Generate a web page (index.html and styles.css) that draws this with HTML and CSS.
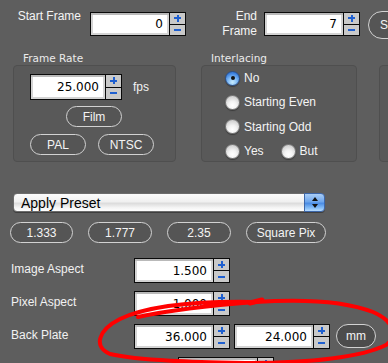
FILE: index.html
```html
<!DOCTYPE html>
<html>
<head>
<meta charset="utf-8">
<link rel="stylesheet" href="styles.css">
</head>
<body>
<div class="page">
  <div class="row-top">
    <div class="lbl lbl-start">Start Frame</div>
    <div class="field h24">
      <div class="input w80">0</div>
      <div class="spin"><span class="up"></span><span class="dn"></span></div>
    </div>
    <div class="lbl lbl-end">End<br>Frame</div>
    <div class="field h24">
      <div class="input w80">7</div>
      <div class="spin"><span class="up"></span><span class="dn"></span></div>
    </div>
    <button class="pill pill-big">Set</button>
  </div>

  <div class="groups">
    <div class="group g1">
      <div class="gtitle">Frame Rate</div>
      <div class="gbox">
        <div class="fps-row">
          <div class="field h26">
            <div class="input w76">25.000</div>
            <div class="spin"><span class="up"></span><span class="dn"></span></div>
          </div>
          <span class="unit">fps</span>
        </div>
        <div class="film-row"><button class="pill w56">Film</button></div>
        <div class="std-row">
          <button class="pill w56">PAL</button>
          <button class="pill w56">NTSC</button>
        </div>
      </div>
    </div>
    <div class="group g2">
      <div class="gtitle">Interlacing</div>
      <div class="gbox radios">
        <div class="rrow"><span class="radio on"></span><span class="rlabel">No</span></div>
        <div class="rrow"><span class="radio"></span><span class="rlabel">Starting Even</span></div>
        <div class="rrow"><span class="radio"></span><span class="rlabel">Starting Odd</span></div>
        <div class="rrow">
          <span class="radio"></span><span class="rlabel">Yes</span>
          <span class="radio r-but"></span><span class="rlabel">But</span>
        </div>
      </div>
    </div>
    <div class="group g3">
      <div class="gtitle">&nbsp;</div>
      <div class="gbox"></div>
    </div>
  </div>

  <div class="popup">
    <span class="popup-text">Apply Preset</span>
    <span class="popup-arrows"><span class="arr-up"></span><span class="arr-dn"></span></span>
  </div>

  <div class="presets">
    <button class="pill w63">1.333</button>
    <button class="pill w64">1.777</button>
    <button class="pill w64">2.35</button>
    <button class="pill w80p">Square Pix</button>
  </div>

  <div class="rows">
    <div class="arow">
      <div class="alabel">Image Aspect</div>
      <div class="field h25">
        <div class="input w80">1.500</div>
        <div class="spin"><span class="up"></span><span class="dn"></span></div>
      </div>
    </div>
    <div class="arow">
      <div class="alabel">Pixel Aspect</div>
      <div class="field h25">
        <div class="input w80">1.000</div>
        <div class="spin"><span class="up"></span><span class="dn"></span></div>
      </div>
    </div>
    <div class="arow">
      <div class="alabel">Back Plate</div>
      <div class="field h25">
        <div class="input w80">36.000</div>
        <div class="spin"><span class="up"></span><span class="dn"></span></div>
      </div>
      <div class="field h25 second">
        <div class="input w80">24.000</div>
        <div class="spin"><span class="up"></span><span class="dn"></span></div>
      </div>
      <button class="pill pill-mm">mm</button>
    </div>
    <div class="arow last">
      <div class="field h25">
        <div class="input w80"></div>
        <div class="spin"><span class="up"></span><span class="dn"></span></div>
      </div>
    </div>
  </div>
</div>

<svg class="mark" width="388" height="363" viewBox="0 0 388 363">
  <path d="M255 302 C 200 301, 150 305, 120 319 C 98 330, 93 347, 110 354 C 140 361, 200 362, 250 363 C 310 363, 362 357, 386 345 C 398 336, 394 321, 373 312 C 345 301, 300 299, 255 302 C 215 305, 175 309, 138 317" fill="none" stroke="#ff0000" stroke-width="4" stroke-linecap="round"/>
  <path d="M250 303 L 262 300" fill="none" stroke="#ff0000" stroke-width="5" stroke-linecap="round"/>
</svg>
</body>
</html>
```

FILE: styles.css
```css
html, body {
  margin: 0;
  padding: 0;
  overflow: hidden;
  background: #5e5e5e;
}

body {
  width: 388px;
  height: 363px;
  position: relative;
  font-family: "Liberation Sans", Arial, sans-serif;
  font-size: 12px;
  color: #f2f2f2;
}

.page {
  width: 600px;
}

/* ---------- generic field with spinner ---------- */
.field {
  display: flex;
  flex: none;
}
.h24 { height: 24px; }
.h25 { height: 25px; }
.h26 { height: 26px; }

.input {
  box-sizing: border-box;
  height: 100%;
  border: 1px solid #0a0a0a;
  background: #fff;
  box-shadow: inset 0 2px 0 #b9b9b9, inset 0 0 0 2px #d4d4d4;
  font-family: "DejaVu Sans", sans-serif;
  font-size: 12px;
  color: #000;
  text-align: right;
  padding-right: 6px;
  display: flex;
  align-items: center;
  justify-content: flex-end;
}
.w80 { width: 80px; }
.w76 { width: 76px; }

.spin {
  box-sizing: border-box;
  width: 16px;
  height: 100%;
  border: 1px solid #0a0a0a;
  border-left: none;
  display: flex;
  flex-direction: column;
}
.spin span {
  flex: 1;
  background: #c9c9c9;
  display: flex;
  align-items: center;
  justify-content: center;
}
.spin .up {
  border-bottom: 1px solid #0a0a0a;
}
.spin .up::before {
  content: "";
  width: 7px;
  height: 7px;
  background:
    linear-gradient(#1e5fd0, #1e5fd0) center / 7px 2px no-repeat,
    linear-gradient(#1e5fd0, #1e5fd0) center / 2px 7px no-repeat;
}
.spin .dn::before {
  content: "";
  width: 7px;
  height: 2px;
  background: #1e5fd0;
}

/* ---------- pill buttons ---------- */
.pill {
  box-sizing: border-box;
  height: 21px;
  border: 1px solid #d2d2d2;
  border-radius: 11px;
  background: #555555;
  color: #f4f4f4;
  font-family: "Liberation Sans", Arial, sans-serif;
  font-size: 12px;
  padding: 0;
  margin: 0;
  display: flex;
  align-items: center;
  justify-content: center;
  flex: none;
}
.w56 { width: 56px; }
.w63 { width: 63px; }
.w64 { width: 64px; }
.w80p { width: 80px; }

/* ---------- top row ---------- */
.row-top {
  display: flex;
  align-items: flex-start;
  margin-top: 12px;
  height: 24px;
}
.lbl {
  flex: none;
  text-align: right;
  font-size: 12px;
  color: #f4f4f4;
}
.lbl-start {
  width: 81px;
  line-height: 14px;
  margin-top: -3px;
  margin-right: 9px;
}
.lbl-end {
  width: 71px;
  line-height: 15px;
  margin-top: -3px;
  margin-right: 7px;
}
.pill-big {
  height: 28px;
  border-radius: 14px;
  width: 60px;
  margin-left: 8px;
  margin-top: -1px;
  justify-content: flex-start;
  padding-left: 11px;
}

/* ---------- groups ---------- */
.groups {
  display: flex;
  margin-top: 16px;
  margin-left: 13px;
}
.group {
  flex: none;
}
.g1 { width: 163px; }
.g2 { width: 156px; margin-left: 25px; }
.g3 { width: 120px; margin-left: 22px; }

.gtitle {
  height: 13px;
  line-height: 12px;
  padding-left: 10px;
  font-family: "DejaVu Sans", sans-serif;
  font-size: 10.5px;
  color: #ebebeb;
}
.gbox {
  box-sizing: border-box;
  height: 97px;
  border: 1px solid #4f4f4f;
  border-radius: 4px;
  background: #595959;
}

.fps-row {
  display: flex;
  align-items: center;
  margin-top: 8px;
  padding-left: 16px;
}
.unit {
  margin-left: 11px;
  font-size: 12px;
  line-height: 14px;
}
.film-row {
  display: flex;
  margin-top: 6px;
  padding-left: 52px;
}
.std-row {
  display: flex;
  gap: 12px;
  margin-top: 7px;
  padding-left: 16px;
}

.radios {
  padding-left: 23px;
}
.rrow {
  display: flex;
  align-items: center;
  height: 24.3px;
}
.radio {
  box-sizing: border-box;
  width: 15px;
  height: 15px;
  border-radius: 50%;
  border: 1px solid #7e7e7e;
  background: radial-gradient(circle at 50% 72%, #ffffff 0%, #f3f3f3 35%, #d2d2d2 75%, #bdbdbd 100%);
  box-shadow: 0 1px 1px rgba(0, 0, 0, 0.35);
  flex: none;
  display: flex;
  align-items: center;
  justify-content: center;
}
.radio.on {
  border-color: #2c4f86;
  background: radial-gradient(circle at 50% 78%, #c8ecff 0%, #7db8f4 40%, #3b7fdc 75%, #2d62b8 100%);
}
.radio.on::after {
  content: "";
  width: 4px;
  height: 4px;
  border-radius: 50%;
  background: #111;
}
.rlabel {
  margin-left: 4px;
  font-size: 12px;
  color: #f4f4f4;
}
.r-but {
  margin-left: 17px;
}

/* ---------- popup ---------- */
.popup {
  box-sizing: border-box;
  display: flex;
  align-items: center;
  width: 312px;
  height: 19px;
  margin-top: 31px;
  margin-left: 13px;
  border: 1px solid #6c6c6c;
  border-radius: 4px;
  background: linear-gradient(#fbfbfb 0%, #f0f0f0 45%, #dcdcdc 55%, #f4f4f4 80%, #ffffff 100%);
  box-shadow: 0 1px 0 #3e3e3e;
  position: relative;
}
.popup-text {
  flex: 1;
  padding-left: 7px;
  font-size: 14px;
  color: #000;
}
.popup-arrows {
  box-sizing: border-box;
  width: 21px;
  height: 19px;
  margin: -1px -1px -1px 0;
  border: 1px solid #3c66a8;
  border-radius: 0 4px 4px 0;
  background: linear-gradient(#a9cdf6 0%, #6ea6ec 45%, #4a8ce4 55%, #8cc2f8 85%, #b9dcff 100%);
  display: flex;
  flex-direction: column;
  align-items: center;
  justify-content: center;
  gap: 3px;
}
.arr-up {
  width: 0;
  height: 0;
  border-left: 3px solid transparent;
  border-right: 3px solid transparent;
  border-bottom: 4px solid #111;
}
.arr-dn {
  width: 0;
  height: 0;
  border-left: 3px solid transparent;
  border-right: 3px solid transparent;
  border-top: 4px solid #111;
}

/* ---------- presets ---------- */
.presets {
  display: flex;
  gap: 15px;
  margin-top: 10px;
  margin-left: 10px;
}

/* ---------- aspect rows ---------- */
.rows {
  display: flex;
  flex-direction: column;
  gap: 8px;
  margin-top: 15px;
}
.arow {
  display: flex;
  align-items: flex-start;
}
.alabel {
  box-sizing: border-box;
  width: 134px;
  padding-left: 11px;
  padding-top: 4px;
  line-height: 14px;
  font-size: 12px;
  color: #f2f2f2;
}
.second {
  margin-left: 4px;
}
.pill-mm {
  width: 40px;
  height: 24px;
  border-radius: 12px;
  margin-left: 6px;
  background: #4c4c4c;
  font-size: 12px;
}
.arow.last {
  padding-left: 178px;
}

/* ---------- red annotation ---------- */
.mark {
  position: absolute;
  left: 0;
  top: 0;
  pointer-events: none;
}
```
